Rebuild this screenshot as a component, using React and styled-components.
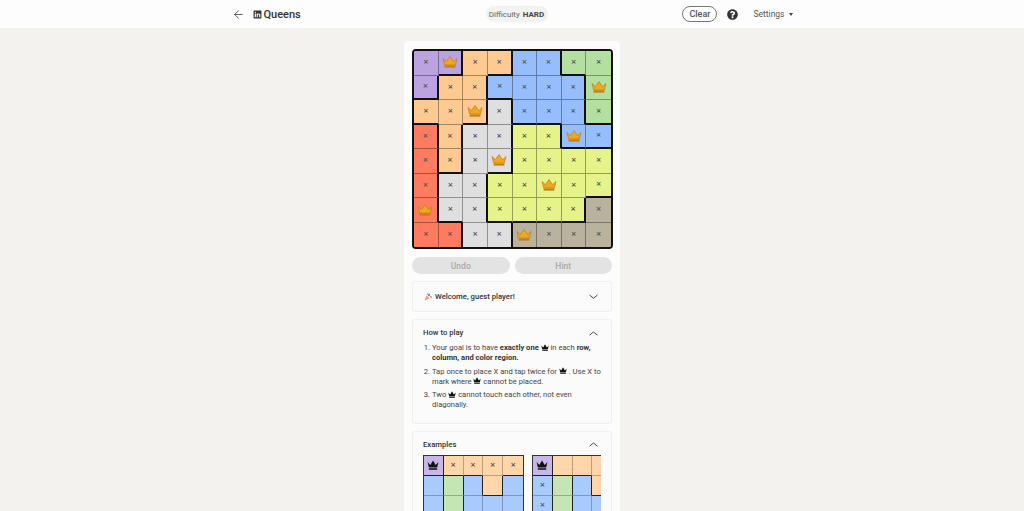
import React from "react";
import styled, { createGlobalStyle } from "styled-components";
import { FaLinkedin, FaQuestionCircle } from "react-icons/fa";
import { ArrowLeft } from "lucide-react";

const Global = createGlobalStyle`
  html, body { margin: 0; padding: 0; height: 100%; overflow: hidden; background: #f3f2ee; }
  body { font-family: Roboto, "Noto Sans", sans-serif; color: #2c2c2c; }
  #root { height: 100%; }
`;

const COLORS = { P: "#bba3e2", O: "#ffc992", B: "#96beff", G: "#b3dfa0", W: "#dfdfdf", R: "#ff7b60", Y: "#e6f388", T: "#b9b29e" };
const LIGHT = { P: "#c9b6e9", O: "#ffd5a9", B: "#a9caff", G: "#c4e6b4" };

const BOARD = ["PPOOBBGG", "POOBBBBG", "OOOWBBBG", "ROWWYYBB", "ROWWYYYY", "RWWYYYYY", "RWWYYYYT", "RRWWTTTT"];
const CROWNS = ["0,1", "1,7", "2,2", "3,6", "4,3", "5,5", "6,0", "7,4"];
const EXAMPLE_ONE = ["POOOO", "BGBOB", "BGBBB"];
const EXAMPLE_TWO = ["POOOO", "BGBOB", "BGBBB"];

const Page = styled.div`
  height: 100%;
  display: flex;
  flex-direction: column;
`;
const Header = styled.header`
  height: 28px;
  flex: none;
  background: #fdfdfd;
  display: flex;
  justify-content: center;
`;
const HeaderInner = styled.div`
  width: 561px;
  display: flex;
  align-items: center;
`;
const Left = styled.div`
  width: 254px;
  display: flex;
  align-items: center;
  color: #333;
`;
const Brand = styled.div`
  margin-left: 8px;
  display: flex;
  align-items: center;
  gap: 2px;
  font-size: 11px;
  font-weight: 500;
  color: #333;
`;
const Pill = styled.div`
  width: 62px;
  height: 16px;
  border-radius: 8px;
  background: #f2f2f0;
  font-size: 8px;
  color: #666;
  display: flex;
  align-items: center;
  justify-content: center;
  gap: 3px;
  white-space: nowrap;
  b { font-weight: 700; color: #444; }
`;
const Right = styled.div`
  margin-left: auto;
  display: flex;
  align-items: center;
  color: #555;
`;
const ClearButton = styled.button`
  width: 35px;
  height: 16px;
  padding: 0;
  border: 1px solid #777;
  border-radius: 8px;
  background: #fff;
  font: 500 9px Roboto, sans-serif;
  color: #555;
`;
const HelpIcon = styled(FaQuestionCircle)`
  margin-left: 10px;
  width: 11px;
  height: 11px;
  color: #333;
`;
const SettingsLabel = styled.div`
  margin-left: 15px;
  font-size: 8.5px;
  font-weight: 400;
  color: #555;
  display: flex;
  align-items: center;
  gap: 4px;
`;
const Caret = styled.span`
  width: 0;
  height: 0;
  border-left: 2.5px solid transparent;
  border-right: 2.5px solid transparent;
  border-top: 3px solid #444;
`;
const Main = styled.main`
  flex: 1;
  min-height: 0;
  display: flex;
  justify-content: center;
  padding-top: 13px;
`;
const Sheet = styled.div`
  width: 200px;
  height: 600px;
  padding: 8px 8px;
  border-radius: 5px 5px 0 0;
  background: #fcfcfc;
  display: flex;
  flex-direction: column;
  flex: none;
`;
const Board = styled.div`
  box-sizing: border-box;
  width: 201px;
  height: 200px;
  border: 2px solid #111;
  border-radius: 4px;
  overflow: hidden;
  display: grid;
  grid-template-columns: repeat(8, 1fr);
  grid-template-rows: repeat(8, 1fr);
  flex: none;
`;
const Cell = styled.div`
  box-sizing: border-box;
  min-width: 0;
  min-height: 0;
  background: ${(p) => p.$color};
  border-right: ${(p) => (p.$right === "none" ? "0" : p.$right === "thick" ? "2px solid #111" : "1px solid rgba(0,0,0,.35)")};
  border-bottom: ${(p) => (p.$bottom === "none" ? "0" : p.$bottom === "thick" ? "2px solid #111" : "1px solid rgba(0,0,0,.35)")};
  display: flex;
  align-items: center;
  justify-content: center;
`;
const Mark = styled.span`
  font: 700 7px/1 "DejaVu Sans", sans-serif;
  color: #555;
`;
const Actions = styled.div`
  display: flex;
  gap: 5px;
  margin-top: 8px;
  flex: none;
`;
const ActionButton = styled.button`
  flex: 1;
  height: 17px;
  padding: 0;
  border: 0;
  border-radius: 9px;
  background: #e2e3e2;
  color: #a9a9a9;
  font: 500 8.5px Roboto, sans-serif;
`;
const Card = styled.section`
  margin-top: ${(p) => p.$gap}px;
  padding: ${(p) => p.$padding};
  border: 1px solid #f0f0ee;
  border-radius: 3px;
  background: #fbfbfb;
  flex: none;
  overflow: hidden;
`;
const CardTitle = styled.div`
  display: flex;
  align-items: center;
  justify-content: space-between;
  padding-right: 3px;
  font-size: 7.7px;
  font-weight: 500;
  color: #333;
  line-height: 12px;
`;
const WelcomeText = styled.div`
  display: flex;
  align-items: center;
  gap: 3px;
  padding-left: 1px;
`;
const Steps = styled.ol`
  margin: 4px 0 0;
  padding: 0 0 0 9px;
  font-size: 7.6px;
  line-height: 10px;
  color: #444;
  li { margin-bottom: 3.5px; }
  b { font-weight: 700; color: #333; }
`;
const InlineCrown = styled.svg`
  width: 8px;
  height: 7px;
  vertical-align: -0.5px;
`;
const Examples = styled.div`
  margin-top: 4px;
  display: flex;
  gap: 8px;
  overflow: hidden;
  height: 60px;
`;
const MiniBoard = styled.div`
  flex: none;
  box-sizing: border-box;
  width: 101px;
  border: 1px solid #333;
  border-bottom: 0;
  display: grid;
  grid-template-columns: repeat(5, 1fr);
  grid-auto-rows: 20px;
`;
const MiniCell = styled(Cell)`
  border-right: ${(p) => (p.$right === "none" ? "0" : p.$right === "thick" ? "1px solid #222" : "1px solid rgba(0,0,0,.25)")};
  border-bottom: ${(p) => (p.$bottom === "thick" ? "1px solid #222" : "1px solid rgba(0,0,0,.25)")};
`;

const CROWN_PATH = "M0.5 2.5 L3.8 6 L7 0.5 L10.2 6 L13.5 2.5 L12 9 H2 Z M2 10 H12 V11.8 H2 Z";

const Crown = () => (
  <svg width="16" height="12" viewBox="0 0 16 12">
    <path d="M1 2.5 L4.3 5.6 L8 .6 L11.7 5.6 L15 2.5 L13.4 9 H2.6 Z" fill="#f0a81e" stroke="#b8740f" strokeWidth=".6" strokeLinejoin="round" />
    <rect x="2.6" y="9.4" width="10.8" height="2.2" fill="#c57f15" />
  </svg>
);
const BlackCrown = () => (
  <InlineCrown viewBox="0 0 14 12">
    <path d={CROWN_PATH} fill="#111" />
  </InlineCrown>
);
const MiniCrown = () => (
  <svg width="12" height="10" viewBox="0 0 14 12">
    <path d={CROWN_PATH} fill="#111" />
  </svg>
);
const Chevron = ({ up }) => (
  <svg width="9" height="5" viewBox="0 0 9 5">
    <path d={up ? "M.5 4.2 L4.5 1 L8.5 4.2" : "M.5 1 L4.5 4.2 L8.5 1"} fill="none" stroke="#333" strokeWidth=".9" />
  </svg>
);
const Party = () => (
  <svg width="8" height="8" viewBox="0 0 8 8">
    <path d="M0.5 7.5 L2.5 2.5 L5.5 5.5 Z" fill="#d9a66b" />
    <circle cx="5" cy="2" r="1.2" fill="#8a7bd1" />
    <circle cx="7" cy="4" r=".9" fill="#e0795f" />
    <circle cx="3.5" cy="1" r=".7" fill="#6aa9d8" />
  </svg>
);

const boardCells = BOARD.flatMap((row, r) =>
  row.split("").map((c, col) => {
    const right = col === 7 ? "none" : row[col + 1] !== c ? "thick" : "thin";
    const bottom = r === 7 ? "none" : BOARD[r + 1][col] !== c ? "thick" : "thin";
    return (
      <Cell key={`${r}-${col}`} $color={COLORS[c]} $right={right} $bottom={bottom}>
        {CROWNS.includes(`${r},${col}`) ? <Crown /> : <Mark>×</Mark>}
      </Cell>
    );
  })
);

const mini = (rows, marks) =>
  rows.flatMap((row, r) =>
    row.split("").map((c, col) => {
      const right = col === 4 ? "none" : row[col + 1] !== c ? "thick" : "thin";
      const bottom = rows[r + 1] && rows[r + 1][col] !== c ? "thick" : "thin";
      const key = `${r},${col}`;
      return (
        <MiniCell key={key} $color={LIGHT[c]} $right={right} $bottom={bottom}>
          {key === "0,0" ? <MiniCrown /> : marks.includes(key) ? <Mark>×</Mark> : null}
        </MiniCell>
      );
    })
  );

export default function App() {
  return (
    <Page>
      <Global />
      <Header>
        <HeaderInner>
          <Left>
            <ArrowLeft size={13} strokeWidth={1.4} />
            <Brand>
              <FaLinkedin size={9} color="#333" />
              Queens
            </Brand>
          </Left>
          <Pill>
            Difficulty <b>HARD</b>
          </Pill>
          <Right>
            <ClearButton>Clear</ClearButton>
            <HelpIcon />
            <SettingsLabel>
              Settings <Caret />
            </SettingsLabel>
          </Right>
        </HeaderInner>
      </Header>
      <Main>
        <Sheet>
          <Board>{boardCells}</Board>
          <Actions>
            <ActionButton>Undo</ActionButton>
            <ActionButton>Hint</ActionButton>
          </Actions>
          <Card $gap={7} $padding="8.5px 10px">
            <CardTitle>
              <WelcomeText>
                <Party /> Welcome, guest player!
              </WelcomeText>
              <Chevron />
            </CardTitle>
          </Card>
          <Card $gap={7} $padding="7px 10px 9px">
            <CardTitle>
              How to play
              <Chevron up />
            </CardTitle>
            <Steps>
              <li>
                Your goal is to have <b>exactly one</b> <BlackCrown /> in each <b>row, column, and color region.</b>
              </li>
              <li>
                Tap once to place X and tap twice for <BlackCrown /> . Use X to mark where <BlackCrown /> cannot be placed.
              </li>
              <li>
                Two <BlackCrown /> cannot touch each other, not even diagonally.
              </li>
            </Steps>
          </Card>
          <Card $gap={7} $padding="7px 10px 0">
            <CardTitle>
              Examples
              <Chevron up />
            </CardTitle>
            <Examples>
              <MiniBoard>{mini(EXAMPLE_ONE, ["0,1", "0,2", "0,3", "0,4"])}</MiniBoard>
              <MiniBoard>{mini(EXAMPLE_TWO, ["1,0", "2,0"])}</MiniBoard>
            </Examples>
          </Card>
        </Sheet>
      </Main>
    </Page>
  );
}
